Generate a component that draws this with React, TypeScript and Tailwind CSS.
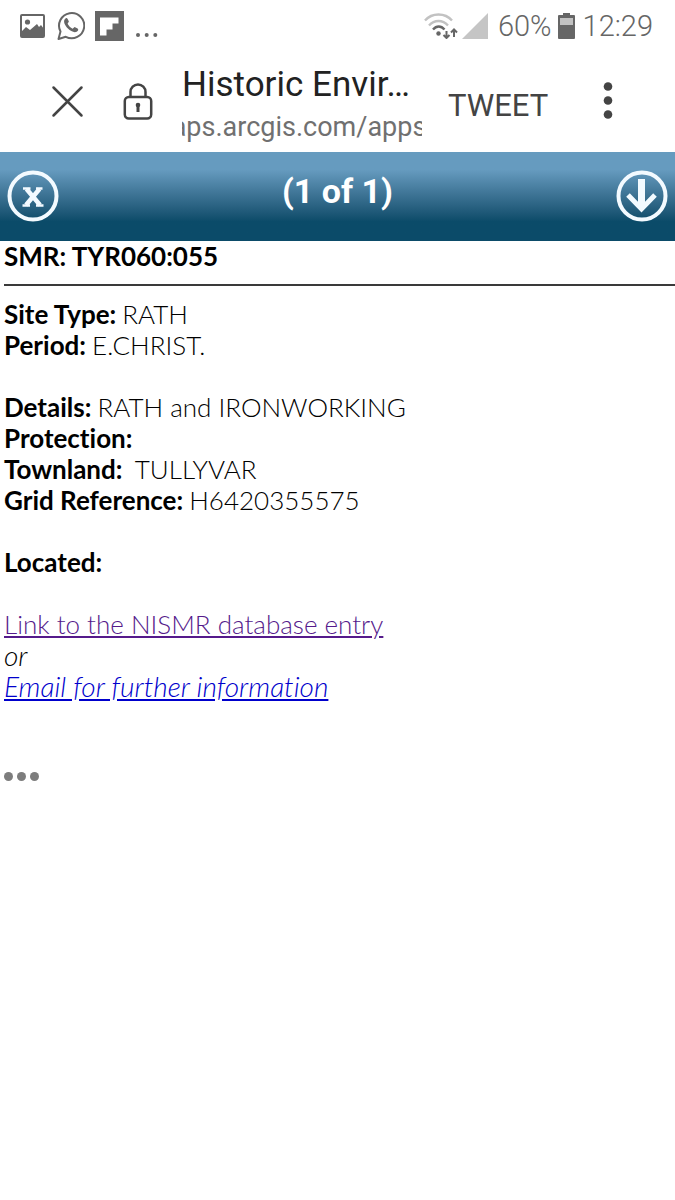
import type { ReactNode } from "react";

interface FieldProps {
  label: string;
  children?: ReactNode;
}

function Field({ label, children }: FieldProps) {
  return (
    <div className="flex gap-1.5">
      <dt className="font-bold">{label}</dt>
      <dd>{children}</dd>
    </div>
  );
}

function StatusBar() {
  return (
    <div className="flex h-[52px] items-center justify-between pr-[22px] pl-5 text-[#666]">
      <div className="flex items-center">
        <svg className="h-6 w-[25px]" viewBox="0 0 25 24">
          <rect x="1" y="1" width="23" height="22" rx="1" fill="none" stroke="currentColor" strokeWidth="2" />
          <circle cx="7.5" cy="8" r="2.6" fill="currentColor" />
          <path d="M1 18l5-5 4 3 7-6 2 3 2-2 3 4v8H1z" fill="currentColor" />
        </svg>
        <svg
          className="ml-3 h-[30px] w-7"
          viewBox="0 0 28 30"
          fill="none"
          stroke="currentColor"
          strokeWidth="2"
          strokeLinejoin="round"
        >
          <path d="M1.5 28l2-7.5A12.6 12.6 0 1 1 8.8 25.8z" />
          <path
            d="M7.6 8.5c1-2 2.500-2 3.300 0l1 2.100-1.300 2.200c1.200 2.300 2.800 3.900 5 4.900l2-1.800 3 1.500c1.200.8.600 2.500-.9 3.300-2.400 1.300-6-.4-8.800-3.200-2.800-2.700-4.800-6.600-3.300-9z"
            fill="currentColor"
            stroke="none"
          />
        </svg>
        <svg className="ml-2.5 h-[30px] w-[29px]" viewBox="0 0 29 30">
          <path d="M0 0h29v30H0z" fill="currentColor" />
          <path d="M5 6.500h18.500v6h-6v6h-6v6H5z" fill="white" />
        </svg>
        <svg className="ml-3 h-[30px] w-[22px]" viewBox="0 0 22 30" fill="currentColor">
          <circle cx="2" cy="24" r="2" />
          <circle cx="10.700" cy="24" r="2" />
          <circle cx="19.300" cy="24" r="2" />
        </svg>
      </div>
      <div className="flex items-center text-[29px]">
        <svg className="h-[26px] w-[34px]" viewBox="0 0 34 26" fill="none">
          <path d="M1 7.500C8 -.5 21 -.5 28 7.500" stroke="#c2c2c2" strokeWidth="2.400" />
          <path d="M5 12.500C10.500 6.500 18.500 6.500 24 12.500" stroke="#c2c2c2" strokeWidth="2.400" />
          <path d="M9 16.500c3.500-4 8-4 11.500 0" stroke="currentColor" strokeWidth="2.400" />
          <circle cx="14.500" cy="20.500" r="2.200" fill="currentColor" />
          <path d="M22.500 18v7m-3-3 3 3 3-3M30 24v-7.500m-3 3 3-3 3 3" stroke="currentColor" strokeWidth="2" />
        </svg>
        <svg className="ml-1 h-[26px] w-[26px]" viewBox="0 0 26 26">
          <path d="M26 0v26H0z" fill="#c5c5c5" />
        </svg>
        <span className="ml-2.5 pt-0.5 font-light">60%</span>
        <svg className="ml-1.5 h-[26px] w-[17px]" viewBox="0 0 17 26">
          <path d="M5 0h7v2h4q1 0 1 1v22q0 1-1 1H1q-1 0-1-1V3q0-1 1-1h4z" fill="currentColor" />
          <path d="M2 5h13v7H2z" fill="#c2c2c2" />
        </svg>
        <span className="ml-2 pt-0.5 font-light">12:29</span>
      </div>
    </div>
  );
}

function BrowserBar() {
  return (
    <header className="flex h-[100px] items-center pl-[50px] text-[#444]">
      <button type="button" aria-label="Close tab" className="shrink-0">
        <svg className="size-[34px]" viewBox="0 0 34 34" stroke="currentColor" strokeWidth="2.500" strokeLinecap="round">
          <path d="M3.500 2.500l28 28M31.500 2.500l-28 28" />
        </svg>
      </button>
      <button type="button" aria-label="Connection is secure" className="ml-[39px] shrink-0">
        <svg className="h-[38px] w-[30px]" viewBox="0 0 30 38" fill="none" stroke="currentColor" strokeWidth="2.500">
          <rect x="1.800" y="14" width="26.400" height="21.500" rx="4" />
          <path d="M7.500 14V9a7.500 7.500 0 0 1 15 0v5" />
          <circle cx="15" cy="22" r="2.300" fill="currentColor" stroke="none" />
          <path d="M15 22v7" strokeWidth="3" />
        </svg>
      </button>
      <div className="ml-[29px] w-60 min-w-0 pt-2">
        <h1 className="text-[35px] leading-[42px] whitespace-nowrap text-[#222]">Historic Envir…</h1>
        <div className="overflow-hidden text-[27px] leading-[42px] whitespace-nowrap text-[#707070]">
          <span className="-ml-[34px]">maps.arcgis.com/apps</span>
        </div>
      </div>
      <button type="button" className="ml-[26px] pt-2 text-[31px] leading-9">
        TWEET
      </button>
      <button type="button" aria-label="More options" className="ml-[54px] shrink-0">
        <svg className="h-10 w-3" viewBox="0 0 12 40" fill="currentColor">
          <circle cx="6" cy="4.500" r="4.300" />
          <circle cx="6" cy="18.500" r="4.300" />
          <circle cx="6" cy="32.500" r="4.300" />
        </svg>
      </button>
    </header>
  );
}

function PopupBar() {
  return (
    <div className="flex h-[89px] items-center justify-between bg-linear-to-b from-[#669bbf] from-20% via-[#0b4b69] via-78% to-[#0b4b69] px-[7px] pb-0.5 text-white">
      <button type="button" aria-label="Close">
        <svg className="size-[52px]" viewBox="0 0 52 52" fill="none" stroke="#f3faff">
          <circle cx="26" cy="26" r="23.500" strokeWidth="4" />
          <path d="M19.500 19L33 35M32.500 19L19 35" strokeWidth="4.500" />
          <path d="M16 18.500h7.500M29 18.500h6.500M15.500 35.500h7.500M29 35.500h7.500" strokeWidth="2.500" />
        </svg>
      </button>
      <h2 className="pb-2 text-[34px] font-bold">(1 of 1)</h2>
      <button type="button" aria-label="Scroll down">
        <svg className="size-[52px]" viewBox="0 0 52 52" fill="none" stroke="#f3faff">
          <circle cx="26" cy="26" r="23.500" strokeWidth="4" />
          <path d="M25.500 9v28" strokeWidth="7" />
          <path d="M12 25l13.500 14L39 25" strokeWidth="5" />
        </svg>
      </button>
    </div>
  );
}

export default function App() {
  return (
    <div className="min-h-screen bg-white font-['Roboto',sans-serif]">
      <StatusBar />
      <BrowserBar />
      <PopupBar />
      <main className="pl-1 font-['Lato',sans-serif] text-[26px] leading-[31px] font-light text-black [font-variant-ligatures:no-common-ligatures]">
        <h3 className="font-bold">SMR: TYR060:055</h3>
        <hr className="mt-3 mb-[13px] border-t-2 border-[#3a3a3a]" />
        <dl>
          <Field label="Site Type:">RATH</Field>
          <Field label="Period:">E.CHRIST.</Field>
        </dl>
        <dl className="mt-[31px]">
          <Field label="Details:">RATH and IRONWORKING</Field>
          <Field label="Protection:" />
          <Field label="Townland:">&nbsp;TULLYVAR</Field>
          <Field label="Grid Reference:">H6420355575</Field>
        </dl>
        <dl className="mt-[31px]">
          <Field label="Located:" />
        </dl>
        <p className="mt-[31px]">
          <a href="#nismr" className="text-[#551a8b] underline">
            Link to the NISMR database entry
          </a>
        </p>
        <div className="text-[28px] leading-[31px] italic">
          <p>or</p>
          <p>
            <a href="#email" className="text-[#0000cc] underline">
              Email for further information
            </a>
          </p>
        </div>
        <button type="button" aria-label="More actions" className="mt-[70px] flex gap-1">
          <span className="size-[9px] rounded-full bg-[#7d7d7d]" />
          <span className="size-[9px] rounded-full bg-[#7d7d7d]" />
          <span className="size-[9px] rounded-full bg-[#7d7d7d]" />
        </button>
      </main>
    </div>
  );
}
